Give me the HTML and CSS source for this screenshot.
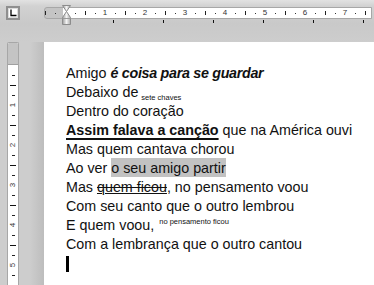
FILE: index.html
```html
<!DOCTYPE html>
<html>
<head>
<meta charset="utf-8">
<link rel="stylesheet" href="styles.css">
</head>
<body>
<div class="app">
  <div class="corner">
    <div class="tabsel">
      <svg width="10" height="10" viewBox="0 0 10 10"><path d="M3 1.5V7.5H8.5" fill="none" stroke="#000" stroke-width="1.3"/></svg>
    </div>
  </div>
  <div class="hzone">
    <div class="hruler">
      <div class="hstrip">
        <span class="c"><i class="ln"></i></span>
        <span class="c"><i class="dot"></i></span>
        <span class="c"></span>
        <span class="c"><i class="dot"></i></span>
        <span class="c"><i class="ln"></i></span>
        <span class="c"><i class="dot"></i></span>
        <span class="c num">1</span>
        <span class="c"><i class="dot"></i></span>
        <span class="c"><i class="ln"></i></span>
        <span class="c"><i class="dot"></i></span>
        <span class="c num">2</span>
        <span class="c"><i class="dot"></i></span>
        <span class="c"><i class="ln"></i></span>
        <span class="c"><i class="dot"></i></span>
        <span class="c num">3</span>
        <span class="c"><i class="dot"></i></span>
        <span class="c"><i class="ln"></i></span>
        <span class="c"><i class="dot"></i></span>
        <span class="c num">4</span>
        <span class="c"><i class="dot"></i></span>
        <span class="c"><i class="ln"></i></span>
        <span class="c"><i class="dot"></i></span>
        <span class="c num">5</span>
        <span class="c"><i class="dot"></i></span>
        <span class="c"><i class="ln"></i></span>
        <span class="c"><i class="dot"></i></span>
        <span class="c num">6</span>
        <span class="c"><i class="dot"></i></span>
        <span class="c"><i class="ln"></i></span>
        <span class="c"><i class="dot"></i></span>
        <span class="c num">7</span>
        <span class="c"><i class="dot"></i></span>
        <span class="c"><i class="ln"></i></span>
      </div>
      <svg class="indent" width="9" height="20" viewBox="0 0 9 20">
        <defs>
          <linearGradient id="sg" x1="0" y1="0" x2="1" y2="0">
            <stop offset="0" stop-color="#9a9a9a"/>
            <stop offset="0.5" stop-color="#f4f4f4"/>
            <stop offset="1" stop-color="#a8a8a8"/>
          </linearGradient>
        </defs>
        <path d="M0.5 0.5H8.5L4.5 6.5L8.5 12.5V19.5H0.5V12.5L4.5 6.5Z" fill="url(#sg)" stroke="#8c8c8c" stroke-width="1"/>
        <path d="M0.5 13.5H8.5" stroke="#9a9a9a" stroke-width="1"/>
      </svg>
    </div>
    <div class="tabs">
      <i></i><i></i><i></i><i></i><i></i><i></i>
    </div>
  </div>
  <div class="vzone">
    <div class="vruler">
      <div class="vmargin"></div>
      <div class="vstrip">
        <span class="r"><i class="sh"></i></span>
        <span class="r"><i class="lg"></i></span>
        <span class="r"><i class="sh"></i></span>
        <span class="r vnum">1</span>
        <span class="r"><i class="sh"></i></span>
        <span class="r"><i class="lg"></i></span>
        <span class="r"><i class="sh"></i></span>
        <span class="r vnum">2</span>
        <span class="r"><i class="sh"></i></span>
        <span class="r"><i class="lg"></i></span>
        <span class="r"><i class="sh"></i></span>
        <span class="r vnum">3</span>
        <span class="r"><i class="sh"></i></span>
        <span class="r"><i class="lg"></i></span>
        <span class="r"><i class="sh"></i></span>
        <span class="r vnum">4</span>
        <span class="r"><i class="sh"></i></span>
        <span class="r"><i class="lg"></i></span>
        <span class="r"><i class="sh"></i></span>
        <span class="r vnum">5</span>
        <span class="r"><i class="sh"></i></span>
        <span class="r"><i class="lg"></i></span>
      </div>
    </div>
  </div>
  <div class="page">
    <p>Amigo <b class="bi">é coisa para se guardar</b></p>
    <p>Debaixo de<span class="sub">sete chaves</span></p>
    <p>Dentro do coração</p>
    <p><b class="ul">Assim falava a canção</b> que na América ouvi</p>
    <p>Mas quem cantava chorou</p>
    <p>Ao ver <span class="hl">o seu amigo partir</span></p>
    <p>Mas <span class="del">quem ficou</span>, no pensamento voou</p>
    <p>Com seu canto que o outro lembrou</p>
    <p>E quem voou,<span class="sup">no pensamento ficou</span></p>
    <p>Com a lembrança que o outro cantou</p>
    <p><span class="caret"></span></p>
  </div>
</div>
</body>
</html>
```

FILE: styles.css
```css
html, body {
  margin: 0;
  padding: 0;
}
body {
  width: 374px;
  height: 285px;
  overflow: hidden;
  background: #cbcbcb;
  font-family: "Liberation Sans", Arial, sans-serif;
}
.app {
  display: grid;
  grid-template-columns: 44px 330px;
  grid-template-rows: 42px 243px;
  height: 285px;
  overflow: hidden;
  background: linear-gradient(to bottom, #e2e2e2 0px, #d2d2d2 6px, #c9c9c9 24px, #cdcdcd 42px);
}
.corner {
  padding: 6px 0 0 6px;
}
.tabsel {
  width: 10px;
  height: 10px;
  border: 2px solid #8f8f8f;
  background: #fff;
  box-shadow: inset 0 0 0 1px #dcdcdc;
  display: flex;
}
.hzone {
  padding-top: 7px;
}
.hruler {
  position: relative;
  width: 326px;
  height: 10px;
  border: 1px solid #a7a7a7;
  border-radius: 3px 0 0 3px;
  background: linear-gradient(to right, #c4c4c4 0, #c4c4c4 18px, #ffffff 18px);
}
.hstrip {
  display: flex;
  margin-left: -5px;
  height: 10px;
  overflow: hidden;
  width: 331px;
}
.c {
  flex: 0 0 10px;
  width: 10px;
  height: 10px;
  display: flex;
  align-items: center;
  justify-content: center;
  font-size: 8px;
  line-height: 10px;
  color: #333;
}
.c .dot {
  width: 1px;
  height: 1px;
  background: #333;
}
.c .ln {
  width: 1px;
  height: 4px;
  background: #222;
}
.indent {
  position: absolute;
  left: 17px;
  top: -3px;
}
.tabs {
  display: flex;
  gap: 49px;
  padding-left: 69px;
  margin-top: 1px;
}
.tabs i {
  width: 1px;
  height: 3px;
  background: #111;
}
.vzone {
  padding-left: 7px;
  overflow: hidden;
  background: linear-gradient(to right, transparent 0, transparent 30px, #bdbdbd 44px);
}
.vruler {
  width: 10px;
  height: 243px;
  border: 1px solid #a7a7a7;
  border-bottom: none;
  border-radius: 2px 2px 0 0;
  background: #fff;
  overflow: hidden;
  box-sizing: border-box;
  width: 12px;
}
.vmargin {
  height: 22px;
  background: #c4c4c4;
  border-bottom: 1px solid #a0a0a0;
  box-sizing: border-box;
}
.vstrip {
  display: flex;
  flex-direction: column;
  margin-top: 5px;
}
.r {
  flex: 0 0 10px;
  height: 10px;
  display: flex;
  align-items: center;
  justify-content: center;
  font-size: 8px;
  color: #333;
}
.r .sh {
  width: 3px;
  height: 1px;
  background: #222;
}
.r .lg {
  width: 6px;
  height: 1px;
  background: #111;
}
.vnum {
  transform: rotate(-90deg);
  line-height: 10px;
}
.page {
  background: #fff;
  padding: 22px 0 0 22px;
  font-size: 14.3px;
  line-height: 19px;
  color: #111;
  overflow: hidden;
}
.page p {
  margin: 0;
  height: 19px;
  white-space: nowrap;
}
.bi {
  font-style: italic;
  letter-spacing: -0.3px;
}
.sub {
  font-size: 7.5px;
  vertical-align: -3px;
  line-height: 0;
  margin-left: 3px;
}
.sup {
  font-size: 7.5px;
  vertical-align: 6px;
  line-height: 0;
  margin-left: 5px;
}
.ul {
  text-decoration: underline;
  text-decoration-thickness: 1.5px;
  text-underline-offset: 3px;
}
.hl {
  background: #c2c2c2;
  padding: 2px 0 1px;
}
.del {
  text-decoration: underline line-through;
  text-decoration-thickness: 1px;
}
.caret {
  display: inline-block;
  width: 3px;
  height: 16px;
  background: #000;
  vertical-align: -4px;
}
```
